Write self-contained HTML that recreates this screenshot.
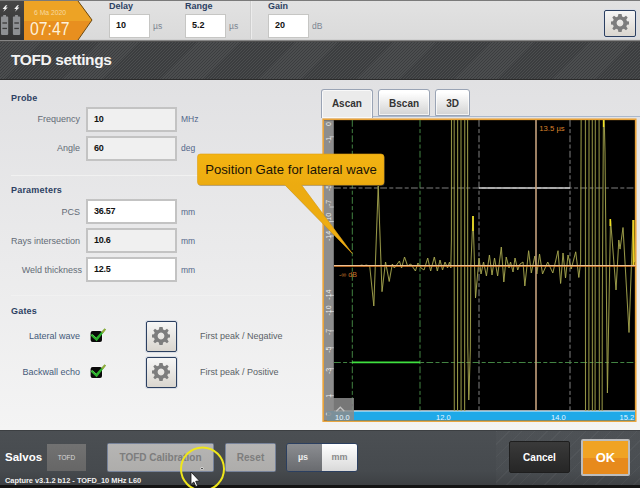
<!DOCTYPE html>
<html><head><meta charset="utf-8"><title>TOFD settings</title>
<style>
*{box-sizing:border-box;margin:0;padding:0}
html,body{width:640px;height:488px;overflow:hidden;background:#e6e6e8;font-family:"Liberation Sans",sans-serif;}
.abs{position:absolute}
#root{position:relative;width:640px;height:488px;overflow:hidden;background:linear-gradient(#e1e1e3 80px,#f4f4f4 430px)}
.lbl{position:absolute;font-size:9px;color:#636b76;white-space:nowrap;text-align:right;line-height:12px}
.sec{position:absolute;left:11px;font-size:9px;font-weight:bold;color:#2d4163;white-space:nowrap;line-height:12px;letter-spacing:0.2px}
.inp{position:absolute;left:86px;width:91px;height:25px;border:2px solid #c3c3c3;background:#f0f0f0;font-size:9px;font-weight:bold;color:#111;line-height:21px;padding-left:6px;letter-spacing:-0.25px}
.inp.w{background:#fff}
.unit{position:absolute;left:181px;font-size:8.5px;color:#53678a;line-height:12px;white-space:nowrap}
.sep{position:absolute;left:11px;width:300px;height:1px;background:#f1f1f1}
.gbtn{position:absolute;border:1px solid #2b3f60;border-radius:2px;background:linear-gradient(#f6f6f6,#dad6cf);box-shadow:0 0 0 1px #d8dce4}
.tab{position:absolute;font-size:10px;font-weight:bold;color:#333;text-align:center;border:1px solid #9aa4b5;border-radius:3px 3px 0 0;line-height:27.4px;box-shadow:inset 0 0 0 1px rgba(255,255,255,0.7)}
</style></head><body><div id="root">

<!-- top bar -->
<div class="abs" style="left:0;top:0;width:640px;height:40px;background:linear-gradient(#e2e2e2,#dadada)"></div>
<div class="abs" style="left:0;top:0;width:640px;height:1px;background:#7a7a7a"></div>
<div class="abs" style="left:0;top:39px;width:640px;height:1px;background:#d0d0d0"></div>
<div class="abs" style="left:0;top:40px;width:640px;height:1px;background:#858585"></div>
<!-- battery block -->
<div class="abs" style="left:0;top:1px;width:24px;height:39px;background:linear-gradient(#464646,#343434)"></div>
<svg class="abs" style="left:0;top:0" width="100" height="41" viewBox="0 0 100 41">
  <polygon points="24,1 78,1 92,20 78,40 24,40" fill="#e88f1f"/>
  <polygon points="24,1 78,1 92,20 91.3,21 24,21" fill="#eda325"/>
  <polyline points="78,1 92,20 78,40" fill="none" stroke="#6b4a14" stroke-width="1"/>
  <rect x="1" y="16.6" width="7.2" height="18.3" rx="0.8" fill="#8e9093"/><rect x="3.2" y="15" width="2.8" height="2" fill="#8e9093"/>
  <rect x="12.9" y="16.6" width="7.3" height="18.3" rx="0.8" fill="#8e9093"/><rect x="15.1" y="15" width="2.8" height="2" fill="#8e9093"/>
  <rect x="2.4" y="22.2" width="4.6" height="1.6" fill="#4a4a4a"/><rect x="2.4" y="27.8" width="4.6" height="1.3" fill="#3c3c3c"/>
  <rect x="14.3" y="22.2" width="4.6" height="1.6" fill="#4a4a4a"/><rect x="14.3" y="27.8" width="4.6" height="1.3" fill="#3c3c3c"/>
  <polygon points="5.8,5.2 2.6,9 4.8,9 3.4,11.7 7.8,7.6 5.6,7.6 7.4,5.2" fill="#f4f4f4"/>
  <polygon points="17.4,5.2 14.2,9 16.4,9 15,11.7 19.4,7.6 17.2,7.6 19,5.2" fill="#f4f4f4"/>
</svg>
<div class="abs" style="left:34px;top:7.5px;font-size:6.8px;color:#f6d9a0;line-height:9px;white-space:nowrap;">6 Ma 2020</div>
<div class="abs" style="left:30.3px;top:18.3px;font-size:17.6px;color:#fdf2da;line-height:22px;white-space:nowrap;transform-origin:0 0;transform:scaleX(0.9)">07:47</div>

<!-- delay/range/gain -->
<div class="abs" style="left:109px;top:0px;font-size:9px;font-weight:bold;color:#2d4163;line-height:13px">Delay</div>
<div class="abs" style="left:185px;top:0px;font-size:9px;font-weight:bold;color:#2d4163;line-height:13px">Range</div>
<div class="abs" style="left:268px;top:0px;font-size:9px;font-weight:bold;color:#2d4163;line-height:13px">Gain</div>
<div class="abs" style="left:250px;top:1px;width:1px;height:38px;background:#cfcfcf"></div>
<div class="abs" style="left:251px;top:1px;width:1px;height:38px;background:#ececec"></div>
<div class="abs" style="left:109px;top:14px;width:41px;height:24px;border:1.6px solid #c6c6c4;background:#fff;font-size:9px;font-weight:bold;color:#111;line-height:21px;padding-left:6px">10</div>
<div class="abs" style="left:185px;top:14px;width:41px;height:24px;border:1.6px solid #c6c6c4;background:#fff;font-size:9px;font-weight:bold;color:#111;line-height:21px;padding-left:6px">5.2</div>
<div class="abs" style="left:268px;top:14px;width:41px;height:24px;border:1.6px solid #c6c6c4;background:#fff;font-size:9px;font-weight:bold;color:#111;line-height:21px;padding-left:6px">20</div>
<div class="abs" style="left:153px;top:20px;font-size:8.5px;color:#7c8592;line-height:12px">µs</div>
<div class="abs" style="left:229px;top:20px;font-size:8.5px;color:#7c8592;line-height:12px">µs</div>
<div class="abs" style="left:312px;top:20px;font-size:8.5px;color:#7c8592;line-height:12px">dB</div>
<!-- gear top right -->
<div class="gbtn" style="left:604px;top:10px;width:32px;height:27px"></div>
<svg class="abs" style="left:610px;top:13px" width="20" height="20" viewBox="-10 -10 20 20"><use href="#gear"/></svg>

<!-- header -->
<div class="abs" style="left:0;top:41px;width:640px;height:39px;background:#424446;background-image:repeating-linear-gradient(135deg,rgba(255,255,255,0.05) 0,rgba(255,255,255,0.05) 1px,rgba(0,0,0,0.10) 1px,rgba(0,0,0,0.10) 2.1px);border-top:1px solid #4e4e4e;border-bottom:1px solid #2b2b2b"></div>
<div class="abs" style="left:11px;top:49.5px;font-size:15.5px;font-weight:bold;color:#f4f4f4;line-height:20px;white-space:nowrap;letter-spacing:-0.4px">TOFD settings</div>

<!-- left panel -->
<div class="sec" style="top:92px">Probe</div>
<div class="lbl" style="left:0;width:80px;top:113px">Frequency</div>
<div class="inp" style="top:107px">10</div><div class="unit" style="top:113px">MHz</div>
<div class="lbl" style="left:0;width:80px;top:142px">Angle</div>
<div class="inp" style="top:136px">60</div><div class="unit" style="top:142px">deg</div>
<div class="sep" style="top:175px"></div>
<div class="sec" style="top:184px">Parameters</div>
<div class="lbl" style="left:0;width:80px;top:206px">PCS</div>
<div class="inp w" style="top:199px">36.57</div><div class="unit" style="top:206px">mm</div>
<div class="lbl" style="left:0;width:80px;top:235px">Rays intersection</div>
<div class="inp" style="top:228px">10.6</div><div class="unit" style="top:235px">mm</div>
<div class="lbl" style="left:0;width:82px;top:264px">Weld thickness</div>
<div class="inp w" style="top:257px">12.5</div><div class="unit" style="top:264px">mm</div>
<div class="sep" style="top:295px"></div>
<div class="sec" style="top:305px">Gates</div>
<div class="lbl" style="left:0;width:80px;top:330px;color:#455a7a">Lateral wave</div>
<div class="lbl" style="left:0;width:80px;top:366px;color:#455a7a">Backwall echo</div>
<svg class="abs" style="left:88px;top:326px" width="22" height="20" viewBox="0 0 22 20"><use href="#chk"/></svg>
<svg class="abs" style="left:88px;top:362px" width="22" height="20" viewBox="0 0 22 20"><use href="#chk"/></svg>
<div class="gbtn" style="left:146px;top:321px;width:30.5px;height:31px"></div>
<div class="gbtn" style="left:146px;top:357.3px;width:30.5px;height:31px"></div>
<svg class="abs" style="left:151px;top:326px" width="20" height="20" viewBox="-10 -10 20 20"><use href="#gear"/></svg>
<svg class="abs" style="left:151px;top:362px" width="20" height="20" viewBox="-10 -10 20 20"><use href="#gear"/></svg>
<div class="lbl" style="left:200px;top:330px;text-align:left;color:#5a5f66">First peak / Negative</div>
<div class="lbl" style="left:200px;top:366px;text-align:left;color:#5a5f66">First peak / Positive</div>

<!-- right panel -->
<div class="abs" style="left:321px;top:116.3px;width:319px;height:1.2px;background:#aab8cc"></div>
<div class="tab" style="left:321.2px;top:89.3px;width:51.4px;height:29px;background:#ebebeb;border-bottom:none">Ascan</div>
<div class="tab" style="left:378.1px;top:89.3px;width:52px;height:27.2px;background:linear-gradient(#ffffff 10%,#d3d3d3)">Bscan</div>
<div class="tab" style="left:435.4px;top:89.3px;width:34.4px;height:27.2px;background:linear-gradient(#ffffff 10%,#d3d3d3)">3D</div>

<!-- chart -->
<svg class="abs" style="left:0;top:0" width="640" height="488" viewBox="0 0 640 488">
 <defs>
  <linearGradient id="cg" x1="0" y1="154" x2="0" y2="254" gradientUnits="userSpaceOnUse"><stop offset="0" stop-color="#f3b412"/><stop offset="0.31" stop-color="#ecab10"/><stop offset="1" stop-color="#f0ae10"/></linearGradient>
  <clipPath id="cp"><rect x="334" y="120" width="301.5" height="291"/></clipPath>
  <g id="gear">
    <path fill="#7d7d7d" fill-rule="evenodd" d="M-1.6,-9 L1.6,-9 L2.1,-6.6 L3.9,-5.8 L6,-7.2 L7.7,-5.5 L6.3,-3.4 L7,-1.7 L9,-1.4 L9,1.4 L7,1.7 L6.3,3.4 L7.7,5.5 L6,7.2 L3.9,5.8 L2.1,6.6 L1.6,9 L-1.6,9 L-2.1,6.6 L-3.9,5.8 L-6,7.2 L-7.7,5.5 L-6.3,3.4 L-7,1.7 L-9,1.4 L-9,-1.4 L-7,-1.7 L-6.3,-3.4 L-7.7,-5.5 L-6,-7.2 L-3.9,-5.8 L-2.1,-6.6 Z M0,-3.4 A3.4,3.4 0 1 0 0.01,-3.4 Z"/>
  </g>
  <g id="chk">
    <rect x="1.9" y="4.2" width="12.8" height="12.6" rx="2.5" fill="#f6f6f6"/>
    <rect x="2.6" y="4.9" width="11.4" height="11.2" rx="2" fill="#0a0a0a"/>
    <path d="M2.2,9.3 L4.6,8.3 L8.2,11.6 L16.6,2.6 L17.9,3.5 L8.7,15.2 Z" fill="#2cb02c"/>
    <path d="M13.5,6 L16.6,2.6 L17.9,3.5 L15,7.2 Z" fill="#9aa83a"/>
    <path d="M3,9.2 L4.6,8.6 L8.2,12.2" fill="none" stroke="#5fd05a" stroke-width="0.7"/>
  </g>
 </defs>
 <!-- frame -->
 <rect x="323.2" y="119.3" width="312.5" height="301.8" fill="#000" stroke="#e9a33a" stroke-width="1.7"/>
 <rect x="324" y="120.2" width="9.8" height="300" fill="#8d8d8d"/>
 <rect x="327" y="411" width="308" height="9.4" fill="#1fa9e8"/>
 <rect x="334" y="410.3" width="301" height="1.2" fill="#e8f4fa"/>
 <g clip-path="url(#cp)">
  <!-- grid -->
  <line x1="352.3" y1="120" x2="352.3" y2="411" stroke="#4a924a" stroke-width="0.9" stroke-dasharray="6.8,2.3,4,2.3"/>
  <line x1="420" y1="120" x2="420" y2="411" stroke="#4a924a" stroke-width="0.9" stroke-dasharray="6.8,2.3,4,2.3"/>
  <line x1="479" y1="120" x2="479" y2="411" stroke="#8e8e8e" stroke-width="0.9" stroke-dasharray="6.8,2.3,4,2.3"/>
  <line x1="570" y1="120" x2="570" y2="411" stroke="#8e8e8e" stroke-width="0.9" stroke-dasharray="6.8,2.3,4,2.3"/>
  <line x1="334" y1="188" x2="636" y2="188" stroke="#8e8e8e" stroke-width="0.9" stroke-dasharray="6.8,2.3,4,2.3"/>
  <line x1="334" y1="362.5" x2="636" y2="362.5" stroke="#4a924a" stroke-width="0.9" stroke-dasharray="6.8,2.3,4,2.3"/>
  <line x1="479" y1="188" x2="570" y2="188" stroke="#cfcfcf" stroke-width="1.6"/>
  <line x1="352" y1="362.3" x2="420" y2="362.3" stroke="#3fe03f" stroke-width="1.8"/>
  <!-- wave -->
  <polyline points="370.2,266.0 374.3,304.4 378.7,189.2 382.5,290.7 386.0,262.1 389.7,280.9 392.8,264.1 394.8,267.9 399.9,261.2 402.0,267.9 405.0,257.3 408.1,266.0 411.2,264.1 415.9,270.8 418.4,263.1 421.5,267.9 424.5,269.8 428.2,258.3 431.1,270.8 434.8,257.3 437.8,270.8 440.5,260.2 443.0,269.8 445.5,262.1 448.0,267.9 450.0,262.1 451.3,267.9 451.9,241.0 452.1,-37.4 454.6,-37.4 454.8,471.4 458.0,471.4 458.2,-37.4 461.4,-37.4 461.6,471.4 465.1,471.4 465.3,-37.4 468.0,-37.4 468.2,341.8 469.2,394.6 470.8,346.6 471.3,266.0 473.5,218.0 476.0,296.7 479.5,258.3 481.5,273.7 484.0,262.1 486.9,275.6 489.9,255.4 492.5,274.6 495.0,258.3 498.1,275.6 501.8,247.7 504.3,281.3 506.7,257.3 509.5,267.9 511.0,262.1 513.5,271.7 515.5,258.3 518.2,269.8 520.5,264.1 523.5,262.1 525.3,285.2 529.1,251.3 531.8,272.7 535.3,256.4 537.3,273.7 540.0,254.5 543.0,273.7 548.2,262.1 553.3,272.7 558.5,251.3 561.1,282.8 563.5,253.5 566.0,277.5 568.5,255.4 571.7,268.9 576.2,252.3 579.3,277.0 581.1,262.1 581.6,136.4 582.1,-37.4 585.8,-37.4 586.0,471.4 589.3,471.4 589.6,-37.4 592.7,-37.4 592.9,471.4 595.5,471.4 595.9,-37.4 599.4,-37.4 599.9,471.4 602.5,471.4 602.8,298.6 603.9,123.9 604.7,123.9 605.5,157.5 607.9,387.9 611.0,220.9 616.5,289.0 619.2,241.0 620.5,249.7 623.5,229.0 629.5,329.8 633.5,221.8 635.0,262.1 636.5,262.1" fill="none" stroke="#55551f" stroke-width="0.6" stroke-linejoin="round" opacity="0.35"/>
  <polyline points="334.0,265.5 360.0,265.5 362.0,265.0 364.0,266.0 366.0,265.0 368.0,265.5 369.7,266.0 373.8,306.0 378.2,186.0 382.0,291.7 385.5,262.0 389.2,281.5 392.3,264.0 394.3,268.0 399.4,261.0 401.5,268.0 404.5,257.0 407.6,266.0 410.7,264.0 415.4,271.0 417.9,263.0 421.0,268.0 424.0,270.0 427.7,258.0 430.6,271.0 434.3,257.0 437.3,271.0 440.0,260.0 442.5,270.0 445.0,262.0 447.5,268.0 449.5,262.0 450.8,268.0 451.4,240.0 451.6,-50.0 454.1,-50.0 454.3,480.0 457.5,480.0 457.7,-50.0 460.9,-50.0 461.1,480.0 464.6,480.0 464.8,-50.0 467.5,-50.0 467.7,345.0 468.8,400.0 470.3,350.0 470.8,266.0 473.0,216.0 475.5,298.0 479.0,258.0 481.0,274.0 483.5,262.0 486.4,276.0 489.4,255.0 492.0,275.0 494.5,258.0 497.6,276.0 501.3,247.0 503.8,282.0 506.2,257.0 509.0,268.0 510.5,262.0 513.0,272.0 515.0,258.0 517.7,270.0 520.0,264.0 523.0,262.0 524.8,286.0 528.6,250.7 531.3,273.0 534.8,256.0 536.8,274.0 539.5,254.0 542.5,274.0 547.7,262.0 552.8,273.0 558.0,250.7 560.6,283.5 563.0,253.0 565.5,278.0 568.0,255.0 571.2,269.0 575.7,251.8 578.8,277.5 580.6,262.0 581.1,131.0 581.6,-50.0 585.3,-50.0 585.5,480.0 588.8,480.0 589.1,-50.0 592.2,-50.0 592.4,480.0 595.0,480.0 595.4,-50.0 598.9,-50.0 599.4,480.0 602.0,480.0 602.3,300.0 603.4,118.0 604.2,118.0 605.0,153.0 607.4,393.0 610.5,219.0 616.0,290.0 618.8,240.0 620.0,249.0 623.0,227.5 629.0,332.5 633.0,220.0 634.5,262.0 636.0,262.0" fill="none" stroke="#a8a850" stroke-width="0.9" stroke-linejoin="round"/>
  <line x1="473" y1="216" x2="473" y2="231" stroke="#f0e020" stroke-width="1.6"/>
  <line x1="610.3" y1="219" x2="610.3" y2="226" stroke="#f0e020" stroke-width="1.6"/>
  <line x1="603.6" y1="120" x2="603.6" y2="127" stroke="#f0e020" stroke-width="1.4"/>
  <line x1="633.5" y1="220" x2="633.5" y2="265" stroke="#f0d020" stroke-width="2"/>
  <!-- cursor -->
  <line x1="536" y1="120" x2="536" y2="411" stroke="#c4a07c" stroke-width="1.6"/>
  <line x1="334" y1="265.6" x2="636" y2="265.6" stroke="#f2c9a0" stroke-width="1.2"/>
  <line x1="334" y1="266.4" x2="636" y2="266.4" stroke="#d9771f" stroke-width="0.8"/>
  <text x="539.3" y="131.4" font-size="7.7" fill="#d9822b" font-family="Liberation Sans">13.5 µs</text>
  <text x="339" y="277" font-size="7" fill="#c9772b" font-family="Liberation Sans">-∞ dB</text>
 </g>
 <!-- ruler labels -->
 <g font-size="7" fill="#ececec" font-family="Liberation Sans" text-anchor="middle">
  <text transform="translate(331.3,124) rotate(-90)">0</text>
  <text transform="translate(331.3,140) rotate(-90)">-1</text>
  <text transform="translate(331.3,188) rotate(-90)">-5</text>
  <text transform="translate(331.3,203) rotate(-90)">-7</text>
  <text transform="translate(331.3,218) rotate(-90)">-10</text>
  <text transform="translate(331.3,236) rotate(-90)">-14</text>
  <text transform="translate(331.3,294.6) rotate(-90)">-14</text>
  <text transform="translate(331.3,310.4) rotate(-90)">-10</text>
  <text transform="translate(331.3,332) rotate(-90)">-7</text>
  <text transform="translate(331.3,349.6) rotate(-90)">-5</text>
  <text transform="translate(331.3,371) rotate(-90)">-3</text>
  <text transform="translate(331.3,397) rotate(-90)">-1</text>
  <text transform="translate(331.3,414) rotate(-90)">0</text>
 </g>
 <g stroke="#e4e4e4" stroke-width="0.7">
  <line x1="329.5" y1="136.8" x2="333.8" y2="136.8"/>
  <line x1="329.5" y1="207" x2="333.8" y2="207"/>
  <line x1="329.5" y1="221.5" x2="333.8" y2="221.5"/>
  <line x1="329.5" y1="236" x2="333.8" y2="236"/>
  <line x1="329.5" y1="295.4" x2="333.8" y2="295.4"/>
  <line x1="329.5" y1="311.5" x2="333.8" y2="311.5"/>
  <line x1="329.5" y1="330.8" x2="333.8" y2="330.8"/>
  <line x1="329.5" y1="347.8" x2="333.8" y2="347.8"/>
  <line x1="329.5" y1="368.7" x2="333.8" y2="368.7"/>
  <line x1="329.5" y1="395.7" x2="333.8" y2="395.7"/>
 </g>
 <!-- home box -->
 <rect x="327" y="398" width="27" height="22.5" fill="#8c8c8c" opacity="0.85"/>
 <path d="M336.3,411.2 L340.3,407.2 L344.3,411.2" fill="none" stroke="#c2c2c2" stroke-width="1.3"/>
 <g font-size="7.5" fill="#e6f6ff" font-family="Liberation Sans">
  <text x="335" y="419.8">10.0</text>
  <text x="436" y="419.8">12.0</text>
  <text x="551" y="419.8">14.0</text>
  <text x="619.5" y="419.8">15.2</text>
 </g>
 <!-- callout -->
 <path d="M200.5,154 H381 Q384,154 384,157 V182 Q384,185 381,185 H301.5 L352.3,253.5 L285,185 H200.5 Q197.5,185 197.5,182 V157 Q197.5,154 200.5,154 Z" fill="#555" opacity="0.45" transform="translate(0.7,0.9)"/>
 <path d="M200.5,154 H381 Q384,154 384,157 V182 Q384,185 381,185 H301.5 L352.3,253.5 L285,185 H200.5 Q197.5,185 197.5,182 V157 Q197.5,154 200.5,154 Z" fill="url(#cg)" stroke="#dfa010" stroke-width="0.6"/>
 <text x="205.2" y="174.3" font-size="13.15" fill="#1a1406" font-family="Liberation Sans">Position Gate for lateral wave</text>
</svg>

<!-- bottom bar -->
<div class="abs" style="left:0;top:430px;width:640px;height:58px;background:linear-gradient(#4b4f53 0,#464a4e 70%,#3b3e41 100%);border-top:1px solid #3c3f42"></div>
<div class="abs" style="left:496px;top:431px;width:144px;height:54px;background-image:repeating-linear-gradient(135deg,rgba(255,255,255,0.05) 0,rgba(255,255,255,0.05) 1px,rgba(255,255,255,0.015) 1px,rgba(255,255,255,0.015) 9px)"></div>
<div class="abs" style="left:0;top:484.5px;width:640px;height:4px;background:#141414"></div>
<div class="abs" style="left:5px;top:450px;font-size:11.5px;font-weight:bold;color:#fff;line-height:14px">Salvos</div>
<div class="abs" style="left:47px;top:444px;width:39px;height:27px;background:linear-gradient(#727272,#666);font-size:6.5px;color:#d8d8d8;text-align:center;line-height:27px">TOFD</div>
<div class="abs" style="left:107px;top:443px;width:107px;height:29px;background:linear-gradient(#b6b5b4,#aeadab);border:1px solid #77839a;border-radius:1.5px;font-size:10px;font-weight:bold;color:#7d7d7d;text-align:center;line-height:27px;letter-spacing:0px">TOFD Calibration</div>
<div class="abs" style="left:225px;top:443px;width:51px;height:29px;background:linear-gradient(#b6b5b4,#aeadab);border:1px solid #77839a;border-radius:1.5px;font-size:10px;font-weight:bold;color:#7d7d7d;text-align:center;line-height:27px;letter-spacing:0.1px">Reset</div>
<div class="abs" style="left:286px;top:443px;width:72px;height:29px;border:1px solid #2b3f60;border-radius:3px;background:#6b6b6b;overflow:hidden">
  <div class="abs" style="left:0;top:0;width:35px;height:27px;background:linear-gradient(#8b8d91,#696b6f);font-size:9px;font-weight:bold;color:#ececec;text-align:center;line-height:27px;text-indent:-3px">µs</div>
  <div class="abs" style="left:35px;top:0;width:35px;height:27px;background:linear-gradient(#ffffff,#d9d9d9);font-size:9px;font-weight:bold;color:#8a8a8a;text-align:center;line-height:27px">mm</div>
</div>
<div class="abs" style="left:509px;top:441px;width:61px;height:32px;background:linear-gradient(#3a3a3a,#262626);border:1px solid #1e1e1e;border-radius:2px;font-size:10px;font-weight:bold;color:#fff;text-align:center;line-height:32px">Cancel</div>
<div class="abs" style="left:581px;top:439px;width:49px;height:37px;background:linear-gradient(#f0a323 0,#f0a323 50%,#e78a1c 50%,#e78a1c 100%);border:2px solid #bdbdbd;border-radius:2px;font-size:13px;font-weight:bold;color:#fff;text-align:center;line-height:33px">OK</div>
<div class="abs" style="left:5px;top:476px;font-size:7.4px;font-weight:bold;color:#f0f0f0;line-height:10px;white-space:nowrap">Capture v3.1.2 b12 - TOFD_10 MHz L60</div>
<svg class="abs" style="left:0;top:0;pointer-events:none" width="640" height="488" viewBox="0 0 640 488">
 <circle cx="202.5" cy="469" r="21.5" fill="none" stroke="#efe61a" stroke-width="2"/>
 <circle cx="202" cy="468.6" r="1.5" fill="#f0f0f0"/><circle cx="202" cy="468.6" r="0.8" fill="#111"/>
 <path d="M191,472 L191,484.5 L193.8,482 L195.8,486.5 L197.6,485.7 L195.7,481.3 L199.5,481 Z" fill="#fff" stroke="#111" stroke-width="0.8"/>
</svg>
</div></body></html>
